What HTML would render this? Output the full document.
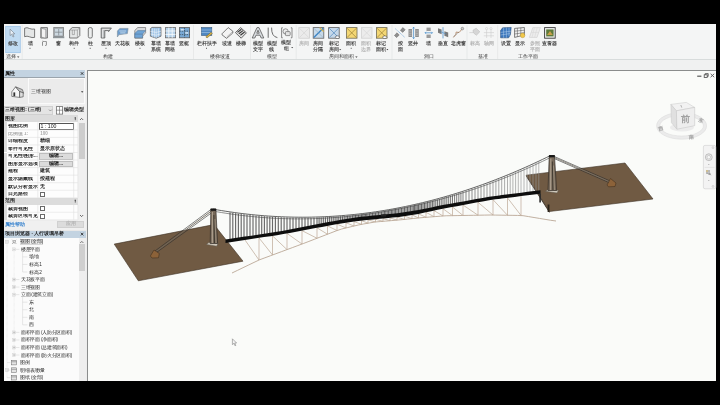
<!DOCTYPE html>
<html><head><meta charset="utf-8">
<style>
*{box-sizing:border-box}
html,body{margin:0;padding:0}
body{width:720px;height:405px;background:#000;position:relative;overflow:hidden;font-family:"Liberation Sans",sans-serif;font-size:4.7px;color:#3a3a3a;line-height:1}
.a{position:absolute}
.t{position:absolute;white-space:nowrap;font-weight:bold}
#w{position:absolute;left:0;top:0;width:720px;height:405px;will-change:transform}
svg{position:absolute;left:0;top:0}
</style></head><body><div id="w">
<!-- ribbon -->
<div class="a" style="left:4px;top:24px;width:712px;height:36px;background:#f4f5f5"></div>
<div class="a" style="left:4px;top:59px;width:712px;height:1px;background:#d8dcdc"></div>
<div class="a" style="left:4px;top:60px;width:712px;height:10px;background:#f0f1f1"></div>
<svg width="720" height="70" viewBox="0 0 720 70">
<rect x="5.75" y="26.25" width="14.5" height="26.5" fill="#c0dbf2" stroke="#8dbbe3" stroke-width="0.6"/><g transform="translate(9.6 28.6)"><path d="M0.5 0.5L0.5 7L2 5.6L3.4 8.4L4.4 7.9L3.1 5.2L5.2 5.2Z" fill="#e8f0f8" stroke="#707a84" stroke-width="0.6"/></g><g transform="translate(24 27)"><path d="M0.6 1.2Q3 0 5.5 1.5Q8 2.6 10.6 2L10.6 10.4Q8 11 5.5 9.8Q3 8.6 0.6 9.7Z" fill="#e4e6e6" stroke="#5a5a5a" stroke-width="0.8"/></g><rect x="29.5" y="47.8" width="1" height="1" fill="#555"/><g transform="translate(40 27)"><path d="M0.8 0.6H7.4V11H0.8Z" fill="#d0d4d6" stroke="#5a5a5a" stroke-width="0.8"/><path d="M1.5 1.3L5.8 2.4V11.2L1.5 10.2Z" fill="#f2f2f2" stroke="#777" stroke-width="0.6"/></g><g transform="translate(53 27)"><rect x="0.8" y="0.6" width="9.8" height="9" fill="#a9b0b4" stroke="#707070" stroke-width="0.7"/><path d="M2 2H9.4V8.4H2Z" fill="#ccd8e0"/><path d="M5.7 2V8.4M2 5.2H9.4" stroke="#7c8488" stroke-width="0.7"/><rect x="0" y="9.4" width="11.3" height="1.8" fill="#8d9498"/></g><g transform="translate(68.8 27)"><path d="M0.8 3L3.4 0.6H11V8.6L8.6 11H0.8Z" fill="#e6e8e8" stroke="#5a5a5a" stroke-width="0.8"/><path d="M0.8 3H8.6V11M8.6 3L11 0.6" fill="none" stroke="#888" stroke-width="0.6"/><path d="M3.5 3V7.6H5.6V3" fill="none" stroke="#777" stroke-width="0.5"/></g><rect x="73.7" y="47.8" width="1" height="1" fill="#555"/><g transform="translate(87.6 27)"><rect x="0.7" y="0.6" width="4" height="10.4" rx="1.5" fill="#eceeee" stroke="#5a5a5a" stroke-width="0.8"/></g><rect x="89.7" y="47.8" width="1" height="1" fill="#555"/><g transform="translate(100.4 27)"><path d="M0.8 1H11L8.2 4.6V3.6H4.4V11H0.8Z" fill="#b9bdbf" stroke="#5a5a5a" stroke-width="0.8"/><path d="M2.2 10.6V2.4H9" stroke="#f0f0f0" stroke-width="0.8" fill="none"/></g><rect x="105.5" y="47.8" width="1" height="1" fill="#555"/><g transform="translate(116.8 27.4)"><path d="M0.6 3.6L3 1H11.3L10.6 6.2L2 7.4L0.6 9.6Z" fill="#6d9ccc" stroke="#7f8e9a" stroke-width="0.6"/><path d="M2.5 3.6H9.4M3.4 5.5H8.6" stroke="#d6e6f3" stroke-width="0.8"/></g><g transform="translate(134.2 27)"><path d="M0.6 3.4L3.6 0.5H11.4V5.8L8.4 9.2V11.2H0.6Z" fill="#d8dadc" stroke="#5a5a5a" stroke-width="0.6"/><path d="M0.6 6.4L3.6 3.6H11.4L8.4 7.1H0.6ZM0.6 7.1V10.8H8.4V7.1" fill="#6ea4d6" stroke="#4a6e90" stroke-width="0.5"/></g><rect x="139.5" y="47.8" width="1" height="1" fill="#555"/><g transform="translate(149.8 27)"><path d="M0.6 1.6L2.2 0.4H11.2V9.2L6.4 11.2L0.6 9.2Z" fill="#9cc2e6" stroke="#5a5a5a" stroke-width="0.7"/><path d="M0.6 4.4L6.4 5.4L11.2 4.2M0.6 7L6.4 8.2L11.2 6.8M2.6 1.2V9.8M4.6 1.6V10.6M6.4 1.8V11M8.6 1.4V10" stroke="#f4f8fb" stroke-width="0.55" fill="none"/></g><g transform="translate(164.8 27)"><rect x="0.6" y="0.6" width="10.2" height="10.2" fill="#b6d2ea" stroke="#6a6a6a" stroke-width="0.8"/><path d="M4 0.6V10.8M7.4 0.6V10.8M0.6 4H10.8M0.6 7.4H10.8" stroke="#f6f9fc" stroke-width="0.9"/></g><g transform="translate(178.8 27)"><rect x="0.6" y="0.6" width="10.2" height="10.2" fill="#78a8d4" stroke="#5a5a5a" stroke-width="0.8"/><path d="M5.7 0.6V10.8M0.6 4.2H10.8M0.6 7.6H10.8" stroke="#3f5060" stroke-width="0.8" stroke-dasharray="1.4 1"/><rect x="2" y="2" width="3" height="1.5" fill="#d4e4f2"/><rect x="6.5" y="5.2" width="3" height="1.5" fill="#d4e4f2"/></g><g transform="translate(201 27)"><rect x="0.4" y="0.5" width="10.4" height="8" fill="#4f88c2" stroke="#3c5d7e" stroke-width="0.6"/><path d="M0.4 3H10.8M0.4 5.5H10.8" stroke="#a8c8e8" stroke-width="0.6"/><path d="M6 11L11.4 6.4L10 5.2L4.8 9.8Z" fill="#d9b54a" stroke="#6c5a2a" stroke-width="0.5"/></g><rect x="206" y="47.8" width="1" height="1" fill="#555"/><g transform="translate(221.6 27)"><path d="M0.4 6.8L6.6 0.6L11.2 4.2V6L5 11.4L0.4 7.8Z" fill="#f4f4f4" stroke="#5a5a5a" stroke-width="0.8"/><path d="M5 10L11.2 4.4" stroke="#888" stroke-width="0.5"/></g><g transform="translate(235 27)"><path d="M0.4 5.6L5.6 0.6L11.4 5.8L6.2 11.2Z" fill="#e4e4e4" stroke="#5a5a5a" stroke-width="0.9"/><path d="M2.4 5.4L6.4 2.2M3.8 6.8L8 3.6M5.4 8.3L9.6 5" stroke="#3a3a3a" stroke-width="1.1"/></g><g transform="translate(251.8 27)"><path d="M0.4 11L5.2 0.6H7.2L12 11H9.4L8.2 8.2H4.2L3 11ZM5 6.2H7.4L6.2 3.2Z" fill="#d8dcdf" stroke="#5a5a5a" stroke-width="0.8"/></g><g transform="translate(267 27)"><path d="M1.2 0.6V10.8M4.6 0.6Q4.4 9.6 10.4 10.6" stroke="#4a4a4a" stroke-width="0.8" fill="none"/></g><g transform="translate(281 27)"><path d="M1.8 0.8H0.6V10.8H1.8M9.8 0.8H11V10.8H9.8" stroke="#5a5a5a" stroke-width="0.7" fill="none"/><circle cx="4.6" cy="4.4" r="2.6" fill="#eee" stroke="#555" stroke-width="0.6"/><rect x="4.4" y="4.6" width="4.8" height="4" rx="0.8" fill="#e4e4e4" stroke="#555" stroke-width="0.6"/></g><path d="M291.2 47h2l-1 1.2z" fill="#444"/><g transform="translate(298.2 27)"><rect x="0.6" y="0.6" width="10.6" height="10.6" fill="#ebebeb" stroke="#cfcfcf" stroke-width="0.8"/><path d="M1.2 1.2L10.6 10.6M10.6 1.2L1.2 10.6" stroke="#d2d2d2" stroke-width="0.6"/></g><g transform="translate(312.6 27)"><rect x="0.6" y="0.6" width="10.6" height="10.6" fill="#c7daea" stroke="#5f5f5f" stroke-width="0.8"/><path d="M1.2 10.6L10.6 1.2" stroke="#3d85c6" stroke-width="1.4"/><path d="M1.2 1.2L10.6 10.6" stroke="#8aa0b0" stroke-width="0.5"/><path d="M7 0.6L11 4.6" stroke="#d9b54a" stroke-width="1.2"/></g><g transform="translate(328 27)"><rect x="0.6" y="0.6" width="10.6" height="10.6" fill="#c5d8ea" stroke="#5f5f5f" stroke-width="0.8"/><path d="M1.2 1.2L10.6 10.6M10.6 1.2L1.2 10.6" stroke="#3d7ab6" stroke-width="0.6"/><ellipse cx="9.4" cy="10.2" rx="2.2" ry="1.3" fill="#fff" stroke="#333" stroke-width="0.5"/></g><path d="M339.2 49h2l-1 1.2z" fill="#444"/><g transform="translate(345.8 27)"><rect x="0.6" y="0.6" width="10.6" height="10.6" fill="#f4d774" stroke="#6f6a55" stroke-width="0.8"/><path d="M1.2 1.2L10.6 10.6M10.6 1.2L1.2 10.6" stroke="#8a6e2a" stroke-width="0.6"/></g><rect x="350.7" y="47.8" width="1" height="1" fill="#555"/><g transform="translate(360.8 27)"><rect x="0.6" y="0.6" width="10.6" height="10.6" fill="#ececec" stroke="#d2d2d2" stroke-width="0.8"/><path d="M1.2 1.2L10.6 10.6M10.6 1.2L1.2 10.6" stroke="#d4d4d4" stroke-width="0.6"/></g><g transform="translate(375.8 27)"><rect x="0.6" y="0.6" width="10.6" height="10.6" fill="#f4d774" stroke="#6f6a55" stroke-width="0.8"/><path d="M1.2 1.2L10.6 10.6M10.6 1.2L1.2 10.6" stroke="#8a6e2a" stroke-width="0.6"/><ellipse cx="9" cy="10.2" rx="2.2" ry="1.3" fill="#fff" stroke="#333" stroke-width="0.5"/></g><path d="M386.4 49h2l-1 1.2z" fill="#444"/><g transform="translate(394 27)"><path d="M6.4 3.2L9 0.6L11.2 2.8L8.6 5.4Z" fill="#8e8e8e" stroke="#666" stroke-width="0.5"/><path d="M0.4 8.4L3 5.8L5.2 8L2.6 10.6Z" fill="#8e8e8e" stroke="#666" stroke-width="0.5"/><path d="M1.4 1.8L10.6 10.2" stroke="#4a90d0" stroke-width="0.7" stroke-dasharray="1 0.7"/></g><g transform="translate(408 27)"><rect x="0.5" y="2" width="3.6" height="8" fill="#8e8e8e"/><rect x="7.2" y="2" width="3.6" height="8" fill="#8e8e8e"/><path d="M1 4H3.6M1 6.2H3.6M1 8.2H3.6M7.6 4H10.2M7.6 6.2H10.2M7.6 8.2H10.2" stroke="#ddd" stroke-width="0.5"/><path d="M5.6 0.2V11.6M4.6 1.4L5.6 0.2L6.6 1.4M4.6 10.4L5.6 11.6L6.6 10.4" stroke="#3c86c8" stroke-width="0.7" fill="none"/></g><g transform="translate(425 27)"><rect x="1.5" y="0.6" width="4.2" height="3.4" fill="#9a9a9a"/><rect x="1.5" y="7.6" width="4.2" height="3.4" fill="#9a9a9a"/><path d="M0 5.8H7.4M1 4.8L0 5.8L1 6.8M6.4 4.8L7.4 5.8L6.4 6.8" stroke="#3c86c8" stroke-width="0.7" fill="none"/></g><g transform="translate(437.6 27)"><path d="M0.4 1.2L4 2.6V7.2L0.4 5.8Z" fill="#7a7a7a"/><path d="M6.8 4.2L10.6 5.6V10.2L6.8 8.8Z" fill="#7a7a7a"/><path d="M5.4 0.2V11.4" stroke="#3c86c8" stroke-width="0.7"/><path d="M2.6 4.6L8.6 7" stroke="#3c86c8" stroke-width="0.5"/></g><g transform="translate(452.6 27)"><path d="M0.8 10.4L3.2 7.6L3.6 5L6.4 5.6L10.4 1" stroke="#b58a6a" stroke-width="0.9" fill="none"/><circle cx="9.8" cy="1.6" r="1.3" fill="#ccc" stroke="#666" stroke-width="0.5"/><path d="M0.8 9.8L6.2 5" stroke="#5a5a5a" stroke-width="0.4"/></g><g transform="translate(469 27)"><path d="M0.4 5.6H4.4" stroke="#cfcfcf" stroke-width="0.7"/><path d="M4 3.2L7.2 1.2L10.8 4.8L7.4 8.2L4.4 5.8Z" fill="#d6d6d6" stroke="#bdbdbd" stroke-width="0.6"/></g><g transform="translate(483 27)"><path d="M3.6 2.6V11M8 2.6V11M0.8 5.6H11M0.8 8.8H11" stroke="#cdcdcd" stroke-width="0.6"/><circle cx="3.6" cy="1.6" r="1.1" fill="#f4f4f4" stroke="#c4c4c4" stroke-width="0.5"/><circle cx="8" cy="1.6" r="1.1" fill="#f4f4f4" stroke="#c4c4c4" stroke-width="0.5"/></g><g transform="translate(500 27)"><path d="M0.6 3.6L2.6 0.8L11.2 0.4L10.4 7.6L8.6 10.8L0.6 10.8Z" fill="#3a76bd" stroke="#2b4f7a" stroke-width="0.6"/><path d="M0.6 5.4L10.8 4.2M0.6 8L10 6.6M3.6 0.6V10.8M6.4 0.5V10.8M9 0.4V9" stroke="#b5d0ec" stroke-width="0.5"/></g><g transform="translate(514 27)"><path d="M0.6 1.4L10.4 0.5V8L0.6 10.4Z" fill="#f4f4f4" stroke="#4a4a4a" stroke-width="0.7"/><path d="M0.6 4.2L10.4 3.2M0.6 7L10.4 5.6M3.4 1.2V9.6M6.8 0.8V9" stroke="#4a4a4a" stroke-width="0.5"/><circle cx="8.6" cy="8.4" r="2.3" fill="#f2c84a" stroke="#a88a2a" stroke-width="0.4"/></g><g transform="translate(529 27)"><path d="M0.4 10.4L3.8 0.6H11.4L8 10.4Z" fill="#ececec" stroke="#cccccc" stroke-width="0.6"/><path d="M2.2 5.4L9.8 5.4M5.4 0.6L3 10.4M8.2 0.6L5.6 10.4" stroke="#d4d4d4" stroke-width="0.5"/></g><g transform="translate(544 27)"><rect x="0.6" y="0.6" width="10.6" height="10.6" fill="#eee" stroke="#3a3a3a" stroke-width="0.9"/><rect x="2.2" y="2.4" width="7.4" height="7" fill="#5e7a3a"/><path d="M3 8L6 4L8.8 8Z" fill="#c8a04a"/></g><path d="M17 56.4h2.4l-1.2 1.3z" fill="#333"/><path d="M355.2 56.4h2.4l-1.2 1.3z" fill="#333"/><rect x="21.8" y="25" width="0.6" height="34" fill="#dfe2e2"/><rect x="193" y="25" width="0.6" height="34" fill="#dfe2e2"/><rect x="250" y="25" width="0.6" height="34" fill="#dfe2e2"/><rect x="295.8" y="25" width="0.6" height="34" fill="#dfe2e2"/><rect x="391.7" y="25" width="0.6" height="34" fill="#dfe2e2"/><rect x="466.7" y="25" width="0.6" height="34" fill="#dfe2e2"/><rect x="497.5" y="25" width="0.6" height="34" fill="#dfe2e2"/>
</svg>
<div class="t" style="left:13px;top:42.2px;width:30px;margin-left:-15px;text-align:center;font-size:4.9px;color:#484848">修改</div>
<div class="t" style="left:30px;top:42.2px;width:30px;margin-left:-15px;text-align:center;font-size:4.9px;color:#484848">墙</div>
<div class="t" style="left:44px;top:42.2px;width:30px;margin-left:-15px;text-align:center;font-size:4.9px;color:#484848">门</div>
<div class="t" style="left:58.5px;top:42.2px;width:30px;margin-left:-15px;text-align:center;font-size:4.9px;color:#484848">窗</div>
<div class="t" style="left:74.2px;top:42.2px;width:30px;margin-left:-15px;text-align:center;font-size:4.9px;color:#484848">构件</div>
<div class="t" style="left:90.2px;top:42.2px;width:30px;margin-left:-15px;text-align:center;font-size:4.9px;color:#484848">柱</div>
<div class="t" style="left:106px;top:42.2px;width:30px;margin-left:-15px;text-align:center;font-size:4.9px;color:#484848">屋顶</div>
<div class="t" style="left:122.8px;top:42.2px;width:30px;margin-left:-15px;text-align:center;font-size:4.9px;color:#484848">天花板</div>
<div class="t" style="left:140px;top:42.2px;width:30px;margin-left:-15px;text-align:center;font-size:4.9px;color:#484848">楼板</div>
<div class="t" style="left:155.6px;top:42.2px;width:30px;margin-left:-15px;text-align:center;font-size:4.9px;color:#484848">幕墙</div>
<div class="t" style="left:155.6px;top:48.4px;width:30px;margin-left:-15px;text-align:center;font-size:4.9px;color:#484848">系统</div>
<div class="t" style="left:170.2px;top:42.2px;width:30px;margin-left:-15px;text-align:center;font-size:4.9px;color:#484848">幕墙</div>
<div class="t" style="left:170.2px;top:48.4px;width:30px;margin-left:-15px;text-align:center;font-size:4.9px;color:#484848">网格</div>
<div class="t" style="left:184px;top:42.2px;width:30px;margin-left:-15px;text-align:center;font-size:4.9px;color:#484848">竖梃</div>
<div class="t" style="left:206.5px;top:42.2px;width:30px;margin-left:-15px;text-align:center;font-size:4.9px;color:#484848">栏杆扶手</div>
<div class="t" style="left:227px;top:42.2px;width:30px;margin-left:-15px;text-align:center;font-size:4.9px;color:#484848">坡道</div>
<div class="t" style="left:241px;top:42.2px;width:30px;margin-left:-15px;text-align:center;font-size:4.9px;color:#484848">楼梯</div>
<div class="t" style="left:257.8px;top:42.2px;width:30px;margin-left:-15px;text-align:center;font-size:4.9px;color:#484848">模型</div>
<div class="t" style="left:257.8px;top:48.4px;width:30px;margin-left:-15px;text-align:center;font-size:4.9px;color:#484848">文字</div>
<div class="t" style="left:271.5px;top:42.2px;width:30px;margin-left:-15px;text-align:center;font-size:4.9px;color:#484848">模型</div>
<div class="t" style="left:271.5px;top:48.4px;width:30px;margin-left:-15px;text-align:center;font-size:4.9px;color:#484848">线</div>
<div class="t" style="left:286px;top:41.2px;width:30px;margin-left:-15px;text-align:center;font-size:4.9px;color:#484848">模型</div>
<div class="t" style="left:286px;top:47.4px;width:30px;margin-left:-15px;text-align:center;font-size:4.9px;color:#484848">组</div>
<div class="t" style="left:304px;top:42.2px;width:30px;margin-left:-15px;text-align:center;font-size:4.9px;color:#b4b4b4">房间</div>
<div class="t" style="left:318.2px;top:42.2px;width:30px;margin-left:-15px;text-align:center;font-size:4.9px;color:#484848">房间</div>
<div class="t" style="left:318.2px;top:48.4px;width:30px;margin-left:-15px;text-align:center;font-size:4.9px;color:#484848">分隔</div>
<div class="t" style="left:334px;top:42.2px;width:30px;margin-left:-15px;text-align:center;font-size:4.9px;color:#484848">标记</div>
<div class="t" style="left:334px;top:48.4px;width:30px;margin-left:-15px;text-align:center;font-size:4.9px;color:#484848">房间</div>
<div class="t" style="left:351.2px;top:42.2px;width:30px;margin-left:-15px;text-align:center;font-size:4.9px;color:#484848">面积</div>
<div class="t" style="left:366.2px;top:42.2px;width:30px;margin-left:-15px;text-align:center;font-size:4.9px;color:#b4b4b4">面积</div>
<div class="t" style="left:366.2px;top:48.4px;width:30px;margin-left:-15px;text-align:center;font-size:4.9px;color:#b4b4b4">边界</div>
<div class="t" style="left:381.2px;top:42.2px;width:30px;margin-left:-15px;text-align:center;font-size:4.9px;color:#484848">标记</div>
<div class="t" style="left:381.2px;top:48.4px;width:30px;margin-left:-15px;text-align:center;font-size:4.9px;color:#484848">面积</div>
<div class="t" style="left:400px;top:42.2px;width:30px;margin-left:-15px;text-align:center;font-size:4.9px;color:#484848">按</div>
<div class="t" style="left:400px;top:48.4px;width:30px;margin-left:-15px;text-align:center;font-size:4.9px;color:#484848">面</div>
<div class="t" style="left:413.4px;top:42.2px;width:30px;margin-left:-15px;text-align:center;font-size:4.9px;color:#484848">竖井</div>
<div class="t" style="left:428.3px;top:42.2px;width:30px;margin-left:-15px;text-align:center;font-size:4.9px;color:#484848">墙</div>
<div class="t" style="left:443px;top:42.2px;width:30px;margin-left:-15px;text-align:center;font-size:4.9px;color:#484848">垂直</div>
<div class="t" style="left:458px;top:42.2px;width:30px;margin-left:-15px;text-align:center;font-size:4.9px;color:#484848">老虎窗</div>
<div class="t" style="left:475px;top:42.2px;width:30px;margin-left:-15px;text-align:center;font-size:4.9px;color:#b4b4b4">标高</div>
<div class="t" style="left:488.6px;top:42.2px;width:30px;margin-left:-15px;text-align:center;font-size:4.9px;color:#b4b4b4">轴网</div>
<div class="t" style="left:505.6px;top:42.2px;width:30px;margin-left:-15px;text-align:center;font-size:4.9px;color:#484848">设置</div>
<div class="t" style="left:519.8px;top:42.2px;width:30px;margin-left:-15px;text-align:center;font-size:4.9px;color:#484848">显示</div>
<div class="t" style="left:534.6px;top:42.2px;width:30px;margin-left:-15px;text-align:center;font-size:4.9px;color:#b4b4b4">参照</div>
<div class="t" style="left:534.6px;top:48.4px;width:30px;margin-left:-15px;text-align:center;font-size:4.9px;color:#b4b4b4">平面</div>
<div class="t" style="left:549.6px;top:42.2px;width:30px;margin-left:-15px;text-align:center;font-size:4.9px;color:#484848">查看器</div>
<div class="t" style="left:10.8px;top:54.0px;width:40px;margin-left:-20px;text-align:center;font-weight:normal;font-size:5.2px;color:#383838">选择</div>
<div class="t" style="left:107.8px;top:54.0px;width:40px;margin-left:-20px;text-align:center;font-weight:normal;font-size:5.2px;color:#383838">构建</div>
<div class="t" style="left:220.4px;top:54.0px;width:40px;margin-left:-20px;text-align:center;font-weight:normal;font-size:5.2px;color:#383838">楼梯坡道</div>
<div class="t" style="left:272px;top:54.0px;width:40px;margin-left:-20px;text-align:center;font-weight:normal;font-size:5.2px;color:#383838">模型</div>
<div class="t" style="left:341px;top:54.0px;width:40px;margin-left:-20px;text-align:center;font-weight:normal;font-size:5.2px;color:#383838">房间和面积</div>
<div class="t" style="left:428.5px;top:54.0px;width:40px;margin-left:-20px;text-align:center;font-weight:normal;font-size:5.2px;color:#383838">洞口</div>
<div class="t" style="left:482.5px;top:54.0px;width:40px;margin-left:-20px;text-align:center;font-weight:normal;font-size:5.2px;color:#383838">基准</div>
<div class="t" style="left:528.2px;top:54.0px;width:40px;margin-left:-20px;text-align:center;font-weight:normal;font-size:5.2px;color:#383838">工作平面</div>
<!-- viewport -->
<div class="a" style="left:87px;top:70px;width:629px;height:311px;background:#fafbf9;border-left:1px solid #8a8c8c;border-top:1px solid #8a8c8c"></div>
<svg width="720" height="405" viewBox="0 0 720 405">
<polygon points="114.2,244.1 214,224.6 243,261.2 138.3,280.8" fill="#705a43" stroke="#3e3226" stroke-width="0.6"/>
<polygon points="526.1,175.2 625,163 653,199 549.5,211.5" fill="#705a43" stroke="#3e3226" stroke-width="0.6"/>
<polygon points="526.1,175.2 549.5,211.5 549.5,213 526.1,176.5" fill="#3a2e22"/>
<polyline points="232,273 237.49,270.36 242.98,267.71 248.47,265.07 253.97,262.42 259.46,259.83 264.95,257.79 270.44,255.75 275.93,253.72 281.42,251.68 286.92,249.64 292.41,247.6 297.9,245.56 303.39,243.53 308.88,241.42 314.37,239.29 319.86,237.17 325.36,235.05 330.85,232.93 336.34,230.81 341.83,228.96 347.32,227.64 352.81,226.32 358.31,225.01 363.8,223.94 369.29,222.99 374.78,222.04 380.27,221.56 385.76,221.1 391.25,220.63 396.75,220.17 402.24,219.67 407.73,219.09 413.22,218.51 418.71,217.94 424.2,217.46 429.69,217.02 435.19,216.59 440.68,216.15 446.17,215.78 451.66,215.68 457.15,215.58 462.64,215.49 468.14,215.39 473.63,215.29 479.12,215.19 484.61,215.1 490.1,215 495.59,215.09 501.08,215.17 506.58,215.26 512.07,215.34 517.56,215.43 523.05,215.68 528.54,216.59 534.03,217.51 539.53,218.42 545.02,219.34 550.51,220.25 556,221" fill="none" stroke="#ad9783" stroke-width="0.75"/>
<path d="M259 237.88V260M272.5 235.86V254.99M287 233.43V249.61M302 230.62V244.04M317 227.84V238.28M327.5 225.9V234.23M337 224.15V230.56M346 222.74V227.96M354 221.58V226.04M361.5 220.58V224.34M368 219.97V223.21M375.5 219.27V221.96M383 218.55V221.33M390 217.88V220.74M397 217.19V220.15M404.5 216.16V219.43M412 214.93V218.64M418.5 213.86V217.96M426 212.32V217.32M434 210.6V216.68M443 208.74V215.96M452.5 206.98V215.67M463 205.03V215.48M478 202.26V215.21M493 199.68V215.05M507.5 197.82V215.27M521 196.11V215.48M259 237.88L272.5 254.99M272.5 235.86L287 249.61M287 233.43L302 244.04M302 230.62L317 238.28M317 227.84L327.5 234.23M327.5 225.9L337 230.56M337 224.15L346 227.96M346 222.74L354 226.04M354 221.58L361.5 224.34M361.5 220.58L368 223.21M368 219.97L375.5 221.96M375.5 219.27L383 221.33M383 218.55L390 220.74M390 217.88L397 220.15M397 217.19L404.5 219.43M404.5 216.16L412 218.64M412 214.93L418.5 217.96M418.5 213.86L426 217.32M426 212.32L434 216.68M434 210.6L443 215.96M443 208.74L452.5 215.67M452.5 206.98L463 215.48M463 205.03L478 215.21M478 202.26L493 215.05M493 199.68L507.5 215.27M507.5 197.82L521 215.48M245 239.99L259 260" fill="none" stroke="#bba895" stroke-width="0.7"/>
<path d="M230 212.51V239.35" stroke="#686868" stroke-width="1.15"/><path d="M232.8 212.91V238.92" stroke="#686868" stroke-width="1.15"/><path d="M235.6 213.3V238.5" stroke="#686868" stroke-width="1.15"/><path d="M238.4 213.67V238.08" stroke="#686868" stroke-width="1.15"/><path d="M241.2 214.02V237.66" stroke="#686868" stroke-width="1.15"/><path d="M244 214.36V237.23" stroke="#686868" stroke-width="1.15"/><path d="M247 214.71V236.78" stroke="#686868" stroke-width="1.15"/><path d="M250 215.04V236.33" stroke="#686868" stroke-width="1.15"/><path d="M253 215.35V235.87" stroke="#686868" stroke-width="1.15"/><path d="M256 215.64V235.42" stroke="#686868" stroke-width="1.15"/><path d="M259 215.91V234.97" stroke="#686868" stroke-width="1.15"/><path d="M261.7 216.14V234.56" stroke="#686868" stroke-width="1.15"/><path d="M264.4 216.36V234.15" stroke="#686868" stroke-width="1.15"/><path d="M267.1 216.56V233.75" stroke="#686868" stroke-width="1.15"/><path d="M269.8 216.74V233.34" stroke="#686868" stroke-width="1.15"/><path d="M272.5 216.91V232.93" stroke="#686868" stroke-width="1.15"/><path d="M275.4 217.08V232.49" stroke="#686868" stroke-width="1.15"/><path d="M278.3 217.23V232.06" stroke="#686868" stroke-width="1.15"/><path d="M281.2 217.36V231.57" stroke="#686868" stroke-width="1.15"/><path d="M284.1 217.48V231.02" stroke="#686868" stroke-width="1.15"/><path d="M287 217.57V230.47" stroke="#686868" stroke-width="1.15"/><path d="M290 217.66V229.9" stroke="#686868" stroke-width="1.15"/><path d="M293 217.72V229.33" stroke="#686868" stroke-width="1.15"/><path d="M296 217.77V228.76" stroke="#686868" stroke-width="1.15"/><path d="M299 217.8V228.19" stroke="#686868" stroke-width="1.15"/><path d="M302 217.81V227.62" stroke="#686868" stroke-width="1.15"/><path d="M305 217.8V227.05" stroke="#686868" stroke-width="1.15"/><path d="M308 217.78V226.48" stroke="#686868" stroke-width="1.15"/><path d="M311 217.73V225.91" stroke="#686868" stroke-width="1.15"/><path d="M314 217.67V225.34" stroke="#686868" stroke-width="1.15"/><path d="M317 217.59V224.77" stroke="#686868" stroke-width="1.15"/><path d="M319.1 217.53V224.37" stroke="#686868" stroke-width="1.15"/><path d="M321.2 217.45V223.97" stroke="#686868" stroke-width="1.15"/><path d="M323.3 217.36V223.57" stroke="#686868" stroke-width="1.15"/><path d="M325.4 217.27V223.17" stroke="#686868" stroke-width="1.15"/><path d="M327.5 217.17V222.78" stroke="#686868" stroke-width="1.15"/><path d="M329.4 217.07V222.41" stroke="#686868" stroke-width="1.15"/><path d="M331.3 216.96V222.05" stroke="#686868" stroke-width="1.15"/><path d="M333.2 216.85V221.69" stroke="#686868" stroke-width="1.15"/><path d="M335.1 216.72V221.33" stroke="#686868" stroke-width="1.15"/><path d="M337 216.59V220.97" stroke="#686868" stroke-width="1.15"/><path d="M338.8 216.46V220.63" stroke="#686868" stroke-width="1.15"/><path d="M340.6 216.33V220.31" stroke="#686868" stroke-width="1.15"/><path d="M342.4 216.19V220.04" stroke="#686868" stroke-width="1.15"/><path d="M344.2 216.04V219.77" stroke="#686868" stroke-width="1.15"/><path d="M346 215.88V219.5" stroke="#686868" stroke-width="1.15"/><path d="M347.6 215.74V219.26" stroke="#686868" stroke-width="1.15"/><path d="M349.2 215.59V219.02" stroke="#686868" stroke-width="1.15"/><path d="M350.8 215.44V218.78" stroke="#686868" stroke-width="1.15"/><path d="M352.4 215.28V218.54" stroke="#686868" stroke-width="1.15"/><path d="M354 215.11V218.3" stroke="#686868" stroke-width="1.15"/><path d="M355.5 214.95V218.08" stroke="#686868" stroke-width="1.15"/><path d="M357 214.79V217.85" stroke="#686868" stroke-width="1.15"/><path d="M358.5 214.62V217.62" stroke="#686868" stroke-width="1.15"/><path d="M360 214.45V217.4" stroke="#686868" stroke-width="1.15"/><path d="M361.5 214.27V217.25" stroke="#686868" stroke-width="1.15"/><path d="M362.8 214.12V217.13" stroke="#686868" stroke-width="1.15"/><path d="M364.1 213.96V217" stroke="#686868" stroke-width="1.15"/><path d="M365.4 213.79V216.87" stroke="#686868" stroke-width="1.15"/><path d="M366.7 213.62V216.75" stroke="#686868" stroke-width="1.15"/><path d="M368 213.45V216.62" stroke="#686868" stroke-width="1.15"/><path d="M369.5 213.25V216.47" stroke="#686868" stroke-width="1.15"/><path d="M371 213.05V216.33" stroke="#686868" stroke-width="1.15"/><path d="M372.5 212.84V216.18" stroke="#686868" stroke-width="1.15"/><path d="M374 212.62V216.03" stroke="#686868" stroke-width="1.15"/><path d="M375.5 212.4V215.89" stroke="#686868" stroke-width="1.15"/><path d="M377 212.18V215.74" stroke="#686868" stroke-width="1.15"/><path d="M378.5 211.95V215.6" stroke="#686868" stroke-width="1.15"/><path d="M380 211.72V215.45" stroke="#686868" stroke-width="1.15"/><path d="M381.5 211.48V215.3" stroke="#686868" stroke-width="1.15"/><path d="M383 211.24V215.16" stroke="#686868" stroke-width="1.15"/><path d="M384.4 211.01V215.02" stroke="#686868" stroke-width="1.15"/><path d="M385.8 210.78V214.88" stroke="#686868" stroke-width="1.15"/><path d="M387.2 210.54V214.75" stroke="#686868" stroke-width="1.15"/><path d="M388.6 210.3V214.61" stroke="#686868" stroke-width="1.15"/><path d="M390 210.06V214.47" stroke="#686868" stroke-width="1.15"/><path d="M391.4 209.81V214.34" stroke="#686868" stroke-width="1.15"/><path d="M392.8 209.55V214.2" stroke="#686868" stroke-width="1.15"/><path d="M394.2 209.3V214.07" stroke="#686868" stroke-width="1.15"/><path d="M395.6 209.04V213.93" stroke="#686868" stroke-width="1.15"/><path d="M397 208.77V213.79" stroke="#686868" stroke-width="1.15"/><path d="M398.5 208.48V213.65" stroke="#686868" stroke-width="1.15"/><path d="M400 208.19V213.5" stroke="#686868" stroke-width="1.15"/><path d="M401.5 207.89V213.26" stroke="#686868" stroke-width="1.15"/><path d="M403 207.59V213.02" stroke="#686868" stroke-width="1.15"/><path d="M404.5 207.29V212.78" stroke="#686868" stroke-width="1.15"/><path d="M406 206.97V212.54" stroke="#686868" stroke-width="1.15"/><path d="M407.5 206.66V212.3" stroke="#686868" stroke-width="1.15"/><path d="M409 206.34V212.06" stroke="#686868" stroke-width="1.15"/><path d="M410.5 206.02V211.82" stroke="#686868" stroke-width="1.15"/><path d="M412 205.69V211.58" stroke="#686868" stroke-width="1.15"/><path d="M413.3 205.4V211.37" stroke="#686868" stroke-width="1.15"/><path d="M414.6 205.11V211.16" stroke="#686868" stroke-width="1.15"/><path d="M415.9 204.81V210.96" stroke="#686868" stroke-width="1.15"/><path d="M417.2 204.51V210.75" stroke="#686868" stroke-width="1.15"/><path d="M418.5 204.21V210.54" stroke="#686868" stroke-width="1.15"/><path d="M420 203.86V210.3" stroke="#686868" stroke-width="1.15"/><path d="M421.5 203.5V209.99" stroke="#686868" stroke-width="1.14"/><path d="M423 203.14V209.67" stroke="#696969" stroke-width="1.14"/><path d="M424.5 202.78V209.36" stroke="#6a6a6a" stroke-width="1.13"/><path d="M426 202.4V209.04" stroke="#6a6a6a" stroke-width="1.12"/><path d="M427.6 202V208.7" stroke="#6b6b6b" stroke-width="1.11"/><path d="M429.2 201.6V208.37" stroke="#6c6c6c" stroke-width="1.1"/><path d="M430.8 201.19V208.03" stroke="#6c6c6c" stroke-width="1.1"/><path d="M432.4 200.77V207.7" stroke="#6d6d6d" stroke-width="1.09"/><path d="M434 200.35V207.36" stroke="#6e6e6e" stroke-width="1.08"/><path d="M435.8 199.87V206.98" stroke="#6f6f6f" stroke-width="1.07"/><path d="M437.6 199.39V206.6" stroke="#707070" stroke-width="1.06"/><path d="M439.4 198.9V206.23" stroke="#707070" stroke-width="1.05"/><path d="M441.2 198.4V205.88" stroke="#717171" stroke-width="1.04"/><path d="M443 197.89V205.56" stroke="#727272" stroke-width="1.03"/><path d="M444.9 197.35V205.22" stroke="#737373" stroke-width="1.03"/><path d="M446.8 196.81V204.88" stroke="#747474" stroke-width="1.02"/><path d="M448.7 196.25V204.53" stroke="#757575" stroke-width="1.01"/><path d="M450.6 195.69V204.19" stroke="#767676" stroke-width="1"/><path d="M452.5 195.12V203.85" stroke="#767676" stroke-width="0.99"/><path d="M454.6 194.48V203.47" stroke="#777777" stroke-width="0.98"/><path d="M456.7 193.84V203.09" stroke="#787878" stroke-width="0.97"/><path d="M458.8 193.18V202.72" stroke="#797979" stroke-width="0.96"/><path d="M460.9 192.52V202.34" stroke="#7a7a7a" stroke-width="0.95"/><path d="M463 191.85V201.96" stroke="#7b7b7b" stroke-width="0.93"/><path d="M466 190.87V201.42" stroke="#7d7d7d" stroke-width="0.92"/><path d="M469 189.88V200.88" stroke="#7e7e7e" stroke-width="0.9"/><path d="M472 188.87V200.34" stroke="#7f7f7f" stroke-width="0.89"/><path d="M475 187.84V199.8" stroke="#818181" stroke-width="0.87"/><path d="M478 186.8V199.26" stroke="#828282" stroke-width="0.86"/><path d="M481 185.73V198.72" stroke="#848484" stroke-width="0.84"/><path d="M484 184.65V198.18" stroke="#858585" stroke-width="0.83"/><path d="M487 183.55V197.64" stroke="#868686" stroke-width="0.81"/><path d="M490 182.43V197.1" stroke="#888888" stroke-width="0.8"/><path d="M493 181.3V196.72" stroke="#898989" stroke-width="0.78"/><path d="M495.9 180.18V196.36" stroke="#8a8a8a" stroke-width="0.77"/><path d="M498.8 179.05V195.99" stroke="#8c8c8c" stroke-width="0.76"/><path d="M501.7 177.9V195.63" stroke="#8d8d8d" stroke-width="0.74"/><path d="M504.6 176.74V195.26" stroke="#8e8e8e" stroke-width="0.73"/><path d="M507.5 175.56V194.9" stroke="#909090" stroke-width="0.71"/><path d="M510.2 174.44V194.55" stroke="#919191" stroke-width="0.7"/><path d="M512.9 173.32V194.21" stroke="#929292" stroke-width="0.69"/><path d="M515.6 172.17V193.87" stroke="#939393" stroke-width="0.67"/><path d="M518.3 171.02V193.53" stroke="#959595" stroke-width="0.66"/><path d="M521 169.84V193.19" stroke="#969696" stroke-width="0.65"/><path d="M524 168.52V192.82" stroke="#969696" stroke-width="0.65"/><path d="M527 167.19V192.44" stroke="#969696" stroke-width="0.65"/><path d="M530 165.83V192.06" stroke="#969696" stroke-width="0.65"/><path d="M533 164.46V191.68" stroke="#969696" stroke-width="0.65"/><path d="M536 163.07V191.3" stroke="#969696" stroke-width="0.65"/><path d="M538.8 161.76V190.95" stroke="#969696" stroke-width="0.65"/>
<polygon points="225.5,239.52 231.93,238.55 238.36,237.58 244.79,236.61 251.21,235.64 257.64,234.67 264.07,233.7 270.5,232.73 276.93,231.76 283.36,230.66 289.79,229.44 296.21,228.22 302.64,227 309.07,225.78 315.5,224.56 321.93,223.33 328.36,222.11 334.79,220.89 341.21,219.72 347.64,218.75 354.07,217.79 360.5,216.85 366.93,216.22 373.36,215.6 379.79,214.97 386.21,214.34 392.64,213.72 399.07,213.09 405.5,212.12 411.93,211.09 418.36,210.06 424.79,208.79 431.21,207.44 437.64,206.09 444.07,204.87 450.5,203.71 456.93,202.55 463.36,201.4 469.79,200.24 476.21,199.08 482.64,197.92 489.07,196.77 495.5,195.91 501.93,195.1 508.36,194.29 514.79,193.48 521.21,192.67 527.64,191.86 534.07,191.05 540.5,190.3 540.5,193.7 534.07,194.45 527.64,195.27 521.21,196.08 514.79,196.9 508.36,197.72 501.93,198.54 495.5,199.36 489.07,200.23 482.64,201.41 476.21,202.59 469.79,203.77 463.36,204.96 456.93,206.15 450.5,207.35 444.07,208.54 437.64,209.81 431.21,211.2 424.79,212.59 418.36,213.89 411.93,214.94 405.5,216 399.07,216.98 392.64,217.62 386.21,218.24 379.79,218.86 373.36,219.47 366.93,220.07 360.5,220.67 354.07,221.57 347.64,222.5 341.21,223.43 334.79,224.56 328.36,225.74 321.93,226.93 315.5,228.12 309.07,229.31 302.64,230.5 296.21,231.7 289.79,232.91 283.36,234.11 276.93,235.2 270.5,236.16 264.07,237.12 257.64,238.09 251.21,239.05 244.79,240.02 238.36,240.99 231.93,241.96 225.5,242.93" fill="#0d0d0d"/>
<polyline points="213,209.11 217.28,209.87 221.56,210.59 225.84,211.28 230.11,211.92 234.39,212.53 238.67,213.1 242.95,213.64 247.23,214.13 251.51,214.59 255.78,215.02 260.06,215.4 264.34,215.75 268.62,216.06 272.9,216.34 277.18,216.57 281.46,216.77 285.73,216.93 290.01,217.06 294.29,217.15 298.57,217.2 302.85,217.21 307.13,217.19 311.41,217.13 315.68,217.03 319.96,216.9 324.24,216.72 328.52,216.52 332.8,216.27 337.08,215.99 341.35,215.67 345.63,215.31 349.91,214.92 354.19,214.49 358.47,214.03 362.75,213.52 367.03,212.98 371.3,212.41 375.58,211.79 379.86,211.14 384.14,210.46 388.42,209.73 392.7,208.97 396.97,208.18 401.25,207.34 405.53,206.47 409.81,205.57 414.09,204.62 418.37,203.64 422.65,202.63 426.92,201.57 431.2,200.49 435.48,199.36 439.76,198.2 444.04,197 448.32,195.76 452.59,194.49 456.87,193.19 461.15,191.84 465.43,190.46 469.71,189.04 473.99,187.59 478.27,186.1 482.54,184.58 486.82,183.02 491.1,181.42 495.38,179.78 499.66,178.11 503.94,176.41 508.22,174.67 512.49,172.89 516.77,171.07 521.05,169.22 525.33,167.33 529.61,165.41 533.89,163.45 538.16,161.46 542.44,159.43 546.72,157.36 551,155.26" fill="none" stroke="#333" stroke-width="0.75"/>
<polyline points="213,211.09 217.28,211.85 221.56,212.56 225.84,213.24 230.11,213.88 234.39,214.49 238.67,215.05 242.95,215.58 247.23,216.06 251.51,216.51 255.78,216.92 260.06,217.29 264.34,217.62 268.62,217.92 272.9,218.17 277.18,218.38 281.46,218.56 285.73,218.7 290.01,218.8 294.29,218.86 298.57,218.88 302.85,218.86 307.13,218.8 311.41,218.71 315.68,218.57 319.96,218.4 324.24,218.2 328.52,217.95 332.8,217.67 337.08,217.35 341.35,217 345.63,216.61 349.91,216.18 354.19,215.72 358.47,215.23 362.75,214.7 367.03,214.14 371.3,213.54 375.58,212.92 379.86,212.25 384.14,211.56 388.42,210.83 392.7,210.07 396.97,209.28 401.25,208.46 405.53,207.6 409.81,206.71 414.09,205.78 418.37,204.83 422.65,203.84 426.92,202.81 431.2,201.76 435.48,200.66 439.76,199.53 444.04,198.37 448.32,197.17 452.59,195.94 456.87,194.67 461.15,193.36 465.43,192.02 469.71,190.63 473.99,189.22 478.27,187.76 482.54,186.26 486.82,184.73 491.1,183.16 495.38,181.56 499.66,179.91 503.94,178.23 508.22,176.51 512.49,174.75 516.77,172.95 521.05,171.11 525.33,169.24 529.61,167.33 533.89,165.38 538.16,163.4 542.44,161.38 546.72,159.32 551,157.22" fill="none" stroke="#4a4a4a" stroke-width="0.6"/>
<ellipse cx="383.5" cy="215.4" rx="3" ry="1.2" fill="#222"/>
<rect x="547.6" y="204.5" width="1.8" height="7.5" fill="#2a2218"/>
<rect x="539.3" y="193.5" width="1.6" height="9" fill="#2a2a2a"/>
<path d="M210.8 209.6L154.8 251.1M211.9 212.6L157 252.1" stroke="#2e2e2e" stroke-width="0.6" fill="none"/>
<path d="M211.3 211.1L156 251.6" stroke="#6e665a" stroke-width="0.9" fill="none"/>
<path d="M552 155.5L609 180.5M553 158L610 183" stroke="#2e2e2e" stroke-width="0.6" fill="none"/>
<path d="M552.5 156.7L609.5 181.8" stroke="#7a746a" stroke-width="0.8" fill="none"/>
<polygon points="150.4,256 154,250 159.3,253.5 158.5,257.8 152,258" fill="#8c6239" stroke="#3b2a1a" stroke-width="0.5"/>
<polygon points="607,185 610.5,178.5 616,183 615,186.5 608.5,186.8" fill="#8c6239" stroke="#3b2a1a" stroke-width="0.5"/>
<path d="M206.3 244.4L208.8 242.6L218.2 243.2L216.7 246.2Z" fill="#cfc8bb" stroke="#5a544a" stroke-width="0.5"/><polygon points="210.8,209 215.9,209 217.6,243.5 210.2,243.5" fill="#77695a" stroke="#2a2520" stroke-width="0.6"/><path d="M212.35 212L212.3 243" stroke="#c4b8a4" stroke-width="0.8"/><path d="M213.85 215L214.5 243" stroke="#2a2620" stroke-width="0.7"/><path d="M214.95 219L216.1 243" stroke="#b8ae9c" stroke-width="0.5"/><rect x="210.6" y="208.6" width="5.5" height="2.2" fill="#161616"/>
<path d="M545.4 191.35L547.9 189.7L558.5 190.3L557 193Z" fill="#cfc8bb" stroke="#5a544a" stroke-width="0.5"/><polygon points="549.2,155.5 554.5,155.5 556.6,190.5 548,190.5" fill="#77695a" stroke="#2a2520" stroke-width="0.6"/><path d="M550.85 158.5L550.7 190" stroke="#c4b8a4" stroke-width="0.8"/><path d="M552.35 161.5L552.9 190" stroke="#2a2620" stroke-width="0.7"/><path d="M553.45 165.5L554.5 190" stroke="#b8ae9c" stroke-width="0.5"/><rect x="549" y="155.1" width="5.7" height="2.2" fill="#161616"/>
<rect x="697.2" y="75.6" width="4.2" height="1.2" fill="#5a5a5a"/><g fill="none" stroke="#4a4a4a" stroke-width="0.8"><rect x="704.2" y="74.8" width="3" height="2.6"/><path d="M705.2 74.8V73.6H708.2V76.4H707.2"/></g><g fill="none" stroke="#555" stroke-width="0.9"><path d="M710.6 73.8L714.2 77.2M714.2 73.8L710.6 77.2"/></g><ellipse cx="681.6" cy="125.8" rx="23.4" ry="11.8" fill="none" stroke="#ebebeb" stroke-width="3.2"/><ellipse cx="681.6" cy="125.8" rx="25" ry="13.4" fill="none" stroke="#d8d8d8" stroke-width="0.5"/><ellipse cx="681.6" cy="125.8" rx="21.8" ry="10.2" fill="none" stroke="#dadada" stroke-width="0.5"/><ellipse cx="682" cy="127.5" rx="12" ry="4" fill="#ececec"/><path d="M670.9 104.4L686.3 102.4L694.7 107.4L676.4 110.8Z" fill="#f2f2f2" stroke="#c6c6c6" stroke-width="0.5"/><path d="M670.9 104.4L676.4 110.8L676.9 129.2L671.4 122.7Z" fill="#e0e0e0" stroke="#c6c6c6" stroke-width="0.5"/><path d="M676.4 110.8L694.7 107.4L694.7 125.7L676.9 129.2Z" fill="#eeeeee" stroke="#c2c2c2" stroke-width="0.5"/><text x="685.6" y="122.4" font-size="9.4" fill="#a2a2a2" font-weight="bold" text-anchor="middle" font-family="Liberation Sans, sans-serif">前</text><path d="M680.8 105L681.8 107.6" stroke="#8a8a8a" stroke-width="0.6"/><g font-size="5" fill="#a0a0a0" font-weight="bold" font-family="Liberation Sans, sans-serif" text-anchor="middle"><text x="661" y="130.4" transform="rotate(-18 661 128.4)">西</text><text x="691.2" y="139.2" transform="rotate(-6 691 137)">南</text><text x="701.4" y="122.6" transform="rotate(24 701.4 120.4)">东</text></g><rect x="703.4" y="145.4" width="12.4" height="43.4" rx="1.6" fill="#f3f3f3" stroke="#cdcdcd" stroke-width="0.6"/><circle cx="713" cy="147.6" r="1" fill="#e8e8e8" stroke="#b4b4b4" stroke-width="0.4"/><circle cx="713" cy="186.4" r="1" fill="#e8e8e8" stroke="#b4b4b4" stroke-width="0.4"/><circle cx="708.8" cy="157.2" r="3.4" fill="#ececec" stroke="#9c9c9c" stroke-width="0.6"/><circle cx="708.8" cy="157.2" r="1.8" fill="#f6f6f6" stroke="#a8a8a8" stroke-width="0.5"/><path d="M708.2 164.2h1.3l-0.65 0.8z" fill="#6a6a6a"/><path d="M704.6 167.4H714.6" stroke="#d6d6d6" stroke-width="0.5"/><rect x="706.2" y="170.2" width="1.6" height="1.6" fill="#b8a060"/><rect x="708.2" y="170.2" width="1.6" height="1.6" fill="#9a9a9a"/><rect x="706.2" y="172.2" width="1.6" height="1.6" fill="#9a9a9a"/><path d="M708.6 172.8L710.8 175.2" stroke="#555" stroke-width="0.6"/><circle cx="709.2" cy="173.6" r="1" fill="none" stroke="#555" stroke-width="0.4"/><path d="M708.2 180h1.3l-0.65 0.8z" fill="#6a6a6a"/><path d="M232.4 338.8V344.6L233.8 343.4L235 345.8L235.8 345.4L234.7 343H236.6Z" fill="#f4f4f4" stroke="#777" stroke-width="0.55"/>
</svg>
<!-- props panel -->
<div class="a" style="left:4px;top:70px;width:83px;height:160.5px;background:#f0f0f0"></div>
<div class="a" style="left:4px;top:70px;width:80.8px;height:7px;background:#c3d3e1"></div>
<div class="a" style="left:4px;top:77px;width:80.8px;height:0.8px;background:#9aa4ac"></div>
<div class="t" style="left:4.9px;top:71px;color:#1e1e1e;font-size:5.2px">属性</div>
<div class="a" style="left:4.3px;top:78.3px;width:81px;height:26px;background:#ebebeb;border:0.6px solid #fafafa"></div>
<div class="a" style="left:4.3px;top:78.3px;width:25px;height:26px;background:#ececec;border-right:0.6px solid #fbfbfb"></div>
<div class="t" style="left:31px;top:89.6px;color:#2a2a2a;font-weight:normal;font-size:4.9px">三维视图</div>
<div class="a" style="left:4.3px;top:105.8px;width:49px;height:9px;background:#e4e4e4;border:0.5px solid #d0d0d0"></div>
<div class="t" style="left:5.2px;top:108.1px;color:#2a2a2a">三维视图: (三维)</div>
<div class="a" style="left:54.8px;top:105.4px;width:30px;height:9.6px;background:#eeeeee"></div>
<div class="t" style="left:64.2px;top:108.2px;color:#262626">编辑类型</div>
<div class="a" style="left:4.3px;top:115.4px;width:73.6px;height:104.8px;background:#fdfdfd"></div>
<div class="a" style="left:4.3px;top:115.4px;width:73.6px;height:6.9px;background:#dcdcdc"></div>
<div class="t" style="left:5.2px;top:116.8px;color:#2a2a2a">图形</div>
<div class="a" style="left:4.3px;top:122.3px;width:3px;height:7.55px;background:#dcdcdc"></div>
<div class="t" style="left:7.8px;top:124.1px;color:#222222;font-size:4.5px;width:30px;overflow:hidden;font-weight:bold">视图比例</div>
<div class="a" style="left:39px;top:122.6px;width:34.6px;height:7px;background:#fff;border:0.7px solid #555"></div>
<div class="t" style="left:40.6px;top:123.5px;color:#222;font-weight:normal;font-size:5.2px">1 : 100</div>
<div class="a" style="left:4.3px;top:129.85px;width:3px;height:7.55px;background:#dcdcdc"></div>
<div class="t" style="left:7.8px;top:131.65px;color:#a8a8a8;font-size:4.5px;width:30px;overflow:hidden;font-weight:bold">比例值 1:</div>
<div class="t" style="left:40.2px;top:131.65px;color:#a8a8a8;font-size:4.5px;font-weight:bold">100</div>
<div class="a" style="left:4.3px;top:137.4px;width:3px;height:7.55px;background:#dcdcdc"></div>
<div class="t" style="left:7.8px;top:139.2px;color:#222222;font-size:4.5px;width:30px;overflow:hidden;font-weight:bold">详细程度</div>
<div class="t" style="left:40.2px;top:139.2px;color:#222222;font-size:4.5px;font-weight:bold">精细</div>
<div class="a" style="left:4.3px;top:144.95px;width:3px;height:7.55px;background:#dcdcdc"></div>
<div class="t" style="left:7.8px;top:146.75px;color:#222222;font-size:4.5px;width:30px;overflow:hidden;font-weight:bold">零件可见性</div>
<div class="t" style="left:40.2px;top:146.75px;color:#222222;font-size:4.5px;font-weight:bold">显示原状态</div>
<div class="a" style="left:4.3px;top:152.5px;width:3px;height:7.55px;background:#dcdcdc"></div>
<div class="t" style="left:7.8px;top:154.3px;color:#222222;font-size:4.5px;width:30px;overflow:hidden;font-weight:bold">可见性/图形...</div>
<div class="a" style="left:39.2px;top:153px;width:34px;height:6.6px;background:#dcdcdc;border:0.5px solid #bdbdbd"></div>
<div class="t" style="left:56.2px;top:154.2px;width:30px;margin-left:-15px;text-align:center;color:#222">编辑...</div>
<div class="a" style="left:4.3px;top:160.05px;width:3px;height:7.55px;background:#dcdcdc"></div>
<div class="t" style="left:7.8px;top:161.85px;color:#222222;font-size:4.5px;width:30px;overflow:hidden;font-weight:bold">图形显示选项</div>
<div class="a" style="left:39.2px;top:160.55px;width:34px;height:6.6px;background:#dcdcdc;border:0.5px solid #bdbdbd"></div>
<div class="t" style="left:56.2px;top:161.75px;width:30px;margin-left:-15px;text-align:center;color:#222">编辑...</div>
<div class="a" style="left:4.3px;top:167.6px;width:3px;height:7.55px;background:#dcdcdc"></div>
<div class="t" style="left:7.8px;top:169.4px;color:#222222;font-size:4.5px;width:30px;overflow:hidden;font-weight:bold">规程</div>
<div class="t" style="left:40.2px;top:169.4px;color:#222222;font-size:4.5px;font-weight:bold">建筑</div>
<div class="a" style="left:4.3px;top:175.15px;width:3px;height:7.55px;background:#dcdcdc"></div>
<div class="t" style="left:7.8px;top:176.95px;color:#222222;font-size:4.5px;width:30px;overflow:hidden;font-weight:bold">显示隐藏线</div>
<div class="t" style="left:40.2px;top:176.95px;color:#222222;font-size:4.5px;font-weight:bold">按规程</div>
<div class="a" style="left:4.3px;top:182.7px;width:3px;height:7.55px;background:#dcdcdc"></div>
<div class="t" style="left:7.8px;top:184.5px;color:#222222;font-size:4.5px;width:30px;overflow:hidden;font-weight:bold">默认分析显示...</div>
<div class="t" style="left:40.2px;top:184.5px;color:#222222;font-size:4.5px;font-weight:bold">无</div>
<div class="a" style="left:4.3px;top:190.25px;width:3px;height:7.55px;background:#dcdcdc"></div>
<div class="t" style="left:7.8px;top:192.05px;color:#222222;font-size:4.5px;width:30px;overflow:hidden;font-weight:bold">日光路径</div>
<div class="a" style="left:40px;top:191.55px;width:5.2px;height:5.2px;background:#fff;border:0.5px solid #6a6a6a"></div>
<div class="a" style="left:4.3px;top:197.8px;width:73.6px;height:6.9px;background:#dcdcdc"></div>
<div class="t" style="left:5.2px;top:199.2px;color:#2a2a2a">范围</div>
<div class="a" style="left:4.3px;top:204.7px;width:3px;height:7.55px;background:#dcdcdc"></div>
<div class="t" style="left:7.8px;top:206.5px;color:#222222;font-size:4.5px;width:30px;overflow:hidden;font-weight:bold">裁剪视图</div>
<div class="a" style="left:40px;top:206px;width:5.2px;height:5.2px;background:#fff;border:0.5px solid #6a6a6a"></div>
<div class="a" style="left:4.3px;top:212.25px;width:3px;height:7.55px;background:#dcdcdc"></div>
<div class="t" style="left:7.8px;top:214.05px;color:#222222;font-size:4.5px;width:30px;overflow:hidden;font-weight:bold">裁剪区域可见</div>
<div class="a" style="left:40px;top:213.55px;width:5.2px;height:5.2px;background:#fff;border:0.5px solid #6a6a6a"></div>
<div class="a" style="left:78.6px;top:115.4px;width:6.6px;height:104.8px;background:#f0f0f0"></div>
<div class="a" style="left:79px;top:122.6px;width:5.8px;height:36.4px;background:#cdcdcd"></div>
<div class="t" style="left:5px;top:223.4px;color:#3d86cf;font-size:4.6px">属性帮助</div>
<div class="a" style="left:57px;top:220.6px;width:27px;height:7px;background:#dcdcdc;border:0.5px solid #d0d0d0"></div>
<div class="t" style="left:70.5px;top:222.2px;width:20px;margin-left:-10px;text-align:center;color:#b4b4b4">应用</div>
<div class="a" style="left:4px;top:229.6px;width:83px;height:1px;background:#e8e8e8"></div>
<div class="a" style="left:4px;top:230.6px;width:81.5px;height:7.2px;background:#c3d3e1"></div>
<div class="t" style="left:5.2px;top:231.9px;color:#1e1e1e">项目浏览器 - 人行玻璃吊桥</div>
<div class="a" style="left:4px;top:237.8px;width:83px;height:143.2px;background:#fbfbfb"></div>
<div class="a" style="left:78.8px;top:237.8px;width:7px;height:143.2px;background:#eeeeee"></div>
<div class="a" style="left:79.2px;top:244.4px;width:6.2px;height:27px;background:#cfcfcf"></div>
<div class="a" style="left:19.6px;top:239px;width:23px;height:5.6px;background:#eeeeee;border:0.4px solid #d8d8d8"></div>
<div class="t" style="left:20.4px;top:240.3px;color:#2a2a2a;font-size:4.65px;letter-spacing:-0.24px;font-weight:normal">视图 (全部)</div>
<div class="t" style="left:20.8px;top:247.85px;color:#2a2a2a;font-size:4.65px;letter-spacing:-0.24px;font-weight:normal">楼层平面</div>
<div class="t" style="left:28.8px;top:255.4px;color:#2a2a2a;font-size:4.65px;letter-spacing:-0.24px;font-weight:normal">场地</div>
<div class="t" style="left:28.8px;top:262.95px;color:#2a2a2a;font-size:4.65px;letter-spacing:-0.24px;font-weight:normal">标高 1</div>
<div class="t" style="left:28.8px;top:270.5px;color:#2a2a2a;font-size:4.65px;letter-spacing:-0.24px;font-weight:normal">标高 2</div>
<div class="t" style="left:20.8px;top:278.05px;color:#2a2a2a;font-size:4.65px;letter-spacing:-0.24px;font-weight:normal">天花板平面</div>
<div class="t" style="left:20.8px;top:285.6px;color:#2a2a2a;font-size:4.65px;letter-spacing:-0.24px;font-weight:normal">三维视图</div>
<div class="t" style="left:20.8px;top:293.15px;color:#2a2a2a;font-size:4.65px;letter-spacing:-0.24px;font-weight:normal">立面 (建筑立面)</div>
<div class="t" style="left:28.8px;top:300.7px;color:#2a2a2a;font-size:4.65px;letter-spacing:-0.24px;font-weight:normal">东</div>
<div class="t" style="left:28.8px;top:308.25px;color:#2a2a2a;font-size:4.65px;letter-spacing:-0.24px;font-weight:normal">北</div>
<div class="t" style="left:28.8px;top:315.8px;color:#2a2a2a;font-size:4.65px;letter-spacing:-0.24px;font-weight:normal">南</div>
<div class="t" style="left:28.8px;top:323.35px;color:#2a2a2a;font-size:4.65px;letter-spacing:-0.24px;font-weight:normal">西</div>
<div class="t" style="left:20.8px;top:330.9px;color:#2a2a2a;font-size:4.65px;letter-spacing:-0.24px;font-weight:normal">面积平面 (人防分区面积)</div>
<div class="t" style="left:20.8px;top:338.45px;color:#2a2a2a;font-size:4.65px;letter-spacing:-0.24px;font-weight:normal">面积平面 (净面积)</div>
<div class="t" style="left:20.8px;top:346px;color:#2a2a2a;font-size:4.65px;letter-spacing:-0.24px;font-weight:normal">面积平面 (总建筑面积)</div>
<div class="t" style="left:20.8px;top:353.55px;color:#2a2a2a;font-size:4.65px;letter-spacing:-0.24px;font-weight:normal">面积平面 (防火分区面积)</div>
<div class="t" style="left:20.4px;top:361.1px;color:#2a2a2a;font-size:4.65px;letter-spacing:-0.24px;font-weight:normal">图例</div>
<div class="t" style="left:20.4px;top:368.65px;color:#2a2a2a;font-size:4.65px;letter-spacing:-0.24px;font-weight:normal">明细表/数量</div>
<div class="t" style="left:20.4px;top:376.2px;color:#2a2a2a;font-size:4.65px;letter-spacing:-0.24px;font-weight:normal">图纸 (全部)</div>
<div class="a" style="left:85.6px;top:70px;width:1.4px;height:311px;background:#ececec"></div>
<svg width="720" height="405" viewBox="0 0 720 405"><path d="M80.8 72.2L83.4 74.8M83.4 72.2L80.8 74.8" stroke="#222" stroke-width="0.8"/><path d="M81 91.3h2.4l-1.2 1.4z" fill="#333"/><g stroke="#3e3e3e" stroke-width="0.6" stroke-linejoin="round"><path d="M11.8 91.8L15.6 86.8L19.6 91.6V97.4L11.8 96.4Z" fill="#f6f6f6"/><path d="M15.6 86.8L22.4 89.6L23.6 93.2L19.6 91.6Z" fill="#c8c8c8"/><path d="M19.6 91.6L23.2 92.8V96.8L19.6 97.4Z" fill="#dedede"/></g><rect x="13.4" y="92.4" width="1.8" height="3.8" fill="#333"/><path d="M49 109.6L50.4 111L51.8 109.6" stroke="#666" stroke-width="0.6" fill="none"/><g transform="translate(56 106.4)"><rect x="0.3" y="0.3" width="6.4" height="7.4" fill="#fff" stroke="#4a4a4a" stroke-width="0.6"/><path d="M0.3 3.8H6.7M3.5 0.3V7.7" stroke="#4a4a4a" stroke-width="0.5"/></g><path d="M74.6 117.8h1.4M75.3 117.6v2.6" stroke="#333" stroke-width="0.7"/><path d="M7.3 129.85H77.8" stroke="#dadada" stroke-width="0.5"/><path d="M37.8 122.3v7.55 M73.7 122.3v7.55 M77.8 122.3v7.55" stroke="#dadada" stroke-width="0.5"/><path d="M7.3 137.4H77.8" stroke="#dadada" stroke-width="0.5"/><path d="M37.8 129.85v7.55 M73.7 129.85v7.55 M77.8 129.85v7.55" stroke="#dadada" stroke-width="0.5"/><path d="M7.3 144.95H77.8" stroke="#dadada" stroke-width="0.5"/><path d="M37.8 137.4v7.55 M73.7 137.4v7.55 M77.8 137.4v7.55" stroke="#dadada" stroke-width="0.5"/><path d="M7.3 152.5H77.8" stroke="#dadada" stroke-width="0.5"/><path d="M37.8 144.95v7.55 M73.7 144.95v7.55 M77.8 144.95v7.55" stroke="#dadada" stroke-width="0.5"/><path d="M7.3 160.05H77.8" stroke="#dadada" stroke-width="0.5"/><path d="M37.8 152.5v7.55 M73.7 152.5v7.55 M77.8 152.5v7.55" stroke="#dadada" stroke-width="0.5"/><path d="M7.3 167.6H77.8" stroke="#dadada" stroke-width="0.5"/><path d="M37.8 160.05v7.55 M73.7 160.05v7.55 M77.8 160.05v7.55" stroke="#dadada" stroke-width="0.5"/><path d="M7.3 175.15H77.8" stroke="#dadada" stroke-width="0.5"/><path d="M37.8 167.6v7.55 M73.7 167.6v7.55 M77.8 167.6v7.55" stroke="#dadada" stroke-width="0.5"/><path d="M7.3 182.7H77.8" stroke="#dadada" stroke-width="0.5"/><path d="M37.8 175.15v7.55 M73.7 175.15v7.55 M77.8 175.15v7.55" stroke="#dadada" stroke-width="0.5"/><path d="M7.3 190.25H77.8" stroke="#dadada" stroke-width="0.5"/><path d="M37.8 182.7v7.55 M73.7 182.7v7.55 M77.8 182.7v7.55" stroke="#dadada" stroke-width="0.5"/><path d="M7.3 197.8H77.8" stroke="#dadada" stroke-width="0.5"/><path d="M37.8 190.25v7.55 M73.7 190.25v7.55 M77.8 190.25v7.55" stroke="#dadada" stroke-width="0.5"/><path d="M74.6 200.2h1.4M75.3 200v2.6" stroke="#333" stroke-width="0.7"/><path d="M7.3 212.25H77.8" stroke="#dadada" stroke-width="0.5"/><path d="M37.8 204.7v7.55 M73.7 204.7v7.55 M77.8 204.7v7.55" stroke="#dadada" stroke-width="0.5"/><path d="M7.3 219.8H77.8" stroke="#dadada" stroke-width="0.5"/><path d="M37.8 212.25v7.55 M73.7 212.25v7.55 M77.8 212.25v7.55" stroke="#dadada" stroke-width="0.5"/><path d="M80 120L81.6 118.4L83.2 120" stroke="#333" stroke-width="0.7" fill="none"/><path d="M80 215L81.6 216.6L83.2 215" stroke="#333" stroke-width="0.7" fill="none"/><path d="M80.8 232.8L83.4 235.4M83.4 232.8L80.8 235.4" stroke="#222" stroke-width="0.8"/><path d="M80.2 243L81.8 241.4L83.4 243" stroke="#444" stroke-width="0.7" fill="none"/><rect x="5.4" y="240.2" width="3.2" height="3.2" fill="#e6e6e6" stroke="#c8c8c8" stroke-width="0.4"/><g transform="translate(11.2 238.8)" stroke="#555" stroke-width="0.5" fill="none"><path d="M1 1L2 2M5 1L4 2M1 5L2 4M5 5L4 4"/><circle cx="3" cy="3" r="1.2"/></g><rect x="12.6" y="247.85" width="3" height="3" fill="#f0f0f0" stroke="#cfcfcf" stroke-width="0.4"/><path d="M13.2 249.35H15" stroke="#999" stroke-width="0.4"/><path d="M15.6 249.35H19.4" stroke="#c8c8c8" stroke-width="0.4"/><path d="M22.6 256.9H27.4" stroke="#c8c8c8" stroke-width="0.4"/><path d="M22.6 264.45H27.4" stroke="#c8c8c8" stroke-width="0.4"/><path d="M22.6 272H27.4" stroke="#c8c8c8" stroke-width="0.4"/><rect x="12.6" y="278.05" width="3" height="3" fill="#f0f0f0" stroke="#cfcfcf" stroke-width="0.4"/><path d="M13.2 279.55H15" stroke="#999" stroke-width="0.4"/><path d="M14.1 278.65V280.45" stroke="#999" stroke-width="0.4"/><path d="M15.6 279.55H19.4" stroke="#c8c8c8" stroke-width="0.4"/><rect x="12.6" y="285.6" width="3" height="3" fill="#f0f0f0" stroke="#cfcfcf" stroke-width="0.4"/><path d="M13.2 287.1H15" stroke="#999" stroke-width="0.4"/><path d="M14.1 286.2V288" stroke="#999" stroke-width="0.4"/><path d="M15.6 287.1H19.4" stroke="#c8c8c8" stroke-width="0.4"/><rect x="12.6" y="293.15" width="3" height="3" fill="#f0f0f0" stroke="#cfcfcf" stroke-width="0.4"/><path d="M13.2 294.65H15" stroke="#999" stroke-width="0.4"/><path d="M15.6 294.65H19.4" stroke="#c8c8c8" stroke-width="0.4"/><path d="M22.6 302.2H27.4" stroke="#c8c8c8" stroke-width="0.4"/><path d="M22.6 309.75H27.4" stroke="#c8c8c8" stroke-width="0.4"/><path d="M22.6 317.3H27.4" stroke="#c8c8c8" stroke-width="0.4"/><path d="M22.6 324.85H27.4" stroke="#c8c8c8" stroke-width="0.4"/><rect x="12.6" y="330.9" width="3" height="3" fill="#f0f0f0" stroke="#cfcfcf" stroke-width="0.4"/><path d="M13.2 332.4H15" stroke="#999" stroke-width="0.4"/><path d="M14.1 331.5V333.3" stroke="#999" stroke-width="0.4"/><path d="M15.6 332.4H19.4" stroke="#c8c8c8" stroke-width="0.4"/><rect x="12.6" y="338.45" width="3" height="3" fill="#f0f0f0" stroke="#cfcfcf" stroke-width="0.4"/><path d="M13.2 339.95H15" stroke="#999" stroke-width="0.4"/><path d="M14.1 339.05V340.85" stroke="#999" stroke-width="0.4"/><path d="M15.6 339.95H19.4" stroke="#c8c8c8" stroke-width="0.4"/><rect x="12.6" y="346" width="3" height="3" fill="#f0f0f0" stroke="#cfcfcf" stroke-width="0.4"/><path d="M13.2 347.5H15" stroke="#999" stroke-width="0.4"/><path d="M14.1 346.6V348.4" stroke="#999" stroke-width="0.4"/><path d="M15.6 347.5H19.4" stroke="#c8c8c8" stroke-width="0.4"/><rect x="12.6" y="353.55" width="3" height="3" fill="#f0f0f0" stroke="#cfcfcf" stroke-width="0.4"/><path d="M13.2 355.05H15" stroke="#999" stroke-width="0.4"/><path d="M14.1 354.15V355.95" stroke="#999" stroke-width="0.4"/><path d="M15.6 355.05H19.4" stroke="#c8c8c8" stroke-width="0.4"/><rect x="11.6" y="360.3" width="5" height="4.6" fill="#e4e4e4" stroke="#666" stroke-width="0.5"/><path d="M11.6 361.8H16.6" stroke="#666" stroke-width="0.5"/><rect x="5.4" y="368.55" width="3.2" height="3.2" fill="#e6e6e6" stroke="#c8c8c8" stroke-width="0.4"/><rect x="11.6" y="367.85" width="5" height="4.6" fill="#e4e4e4" stroke="#666" stroke-width="0.5"/><path d="M11.6 369.35H16.6" stroke="#666" stroke-width="0.5"/><rect x="11.6" y="375.4" width="5" height="4.6" fill="#e4e4e4" stroke="#666" stroke-width="0.5"/><path d="M11.6 376.9H16.6" stroke="#666" stroke-width="0.5"/><path d="M7 244V377.7" stroke="#d0d0d0" stroke-width="0.4" stroke-dasharray="0.6 0.6"/><path d="M14.1 251.35V355.05" stroke="#d0d0d0" stroke-width="0.4" stroke-dasharray="0.6 0.6"/><path d="M22.6 250.85V272" stroke="#c8c8c8" stroke-width="0.4"/><path d="M22.6 296.15V324.85" stroke="#c8c8c8" stroke-width="0.4"/><path d="M7 362.6H10.4M7 370.15H10.4M7 377.7H10.4" stroke="#c8c8c8" stroke-width="0.4"/></svg>
</div></body></html>
